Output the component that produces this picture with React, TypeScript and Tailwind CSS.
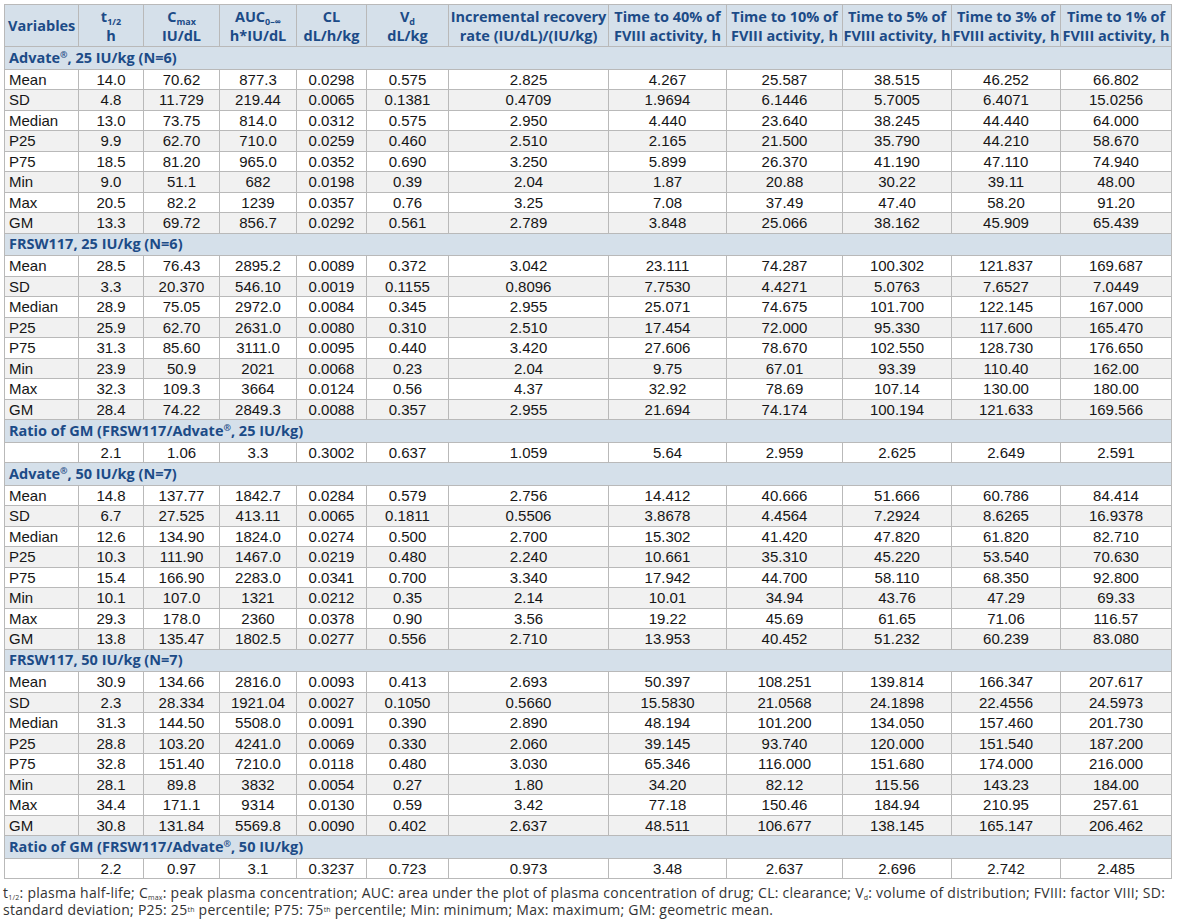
import React from "react"

type Row = string[]

const advate25: Row[] = [
  ["Mean", "14.0", "70.62", "877.3", "0.0298", "0.575", "2.825", "4.267", "25.587", "38.515", "46.252", "66.802"],
  ["SD", "4.8", "11.729", "219.44", "0.0065", "0.1381", "0.4709", "1.9694", "6.1446", "5.7005", "6.4071", "15.0256"],
  ["Median", "13.0", "73.75", "814.0", "0.0312", "0.575", "2.950", "4.440", "23.640", "38.245", "44.440", "64.000"],
  ["P25", "9.9", "62.70", "710.0", "0.0259", "0.460", "2.510", "2.165", "21.500", "35.790", "44.210", "58.670"],
  ["P75", "18.5", "81.20", "965.0", "0.0352", "0.690", "3.250", "5.899", "26.370", "41.190", "47.110", "74.940"],
  ["Min", "9.0", "51.1", "682", "0.0198", "0.39", "2.04", "1.87", "20.88", "30.22", "39.11", "48.00"],
  ["Max", "20.5", "82.2", "1239", "0.0357", "0.76", "3.25", "7.08", "37.49", "47.40", "58.20", "91.20"],
  ["GM", "13.3", "69.72", "856.7", "0.0292", "0.561", "2.789", "3.848", "25.066", "38.162", "45.909", "65.439"],
]

const frsw25: Row[] = [
  ["Mean", "28.5", "76.43", "2895.2", "0.0089", "0.372", "3.042", "23.111", "74.287", "100.302", "121.837", "169.687"],
  ["SD", "3.3", "20.370", "546.10", "0.0019", "0.1155", "0.8096", "7.7530", "4.4271", "5.0763", "7.6527", "7.0449"],
  ["Median", "28.9", "75.05", "2972.0", "0.0084", "0.345", "2.955", "25.071", "74.675", "101.700", "122.145", "167.000"],
  ["P25", "25.9", "62.70", "2631.0", "0.0080", "0.310", "2.510", "17.454", "72.000", "95.330", "117.600", "165.470"],
  ["P75", "31.3", "85.60", "3111.0", "0.0095", "0.440", "3.420", "27.606", "78.670", "102.550", "128.730", "176.650"],
  ["Min", "23.9", "50.9", "2021", "0.0068", "0.23", "2.04", "9.75", "67.01", "93.39", "110.40", "162.00"],
  ["Max", "32.3", "109.3", "3664", "0.0124", "0.56", "4.37", "32.92", "78.69", "107.14", "130.00", "180.00"],
  ["GM", "28.4", "74.22", "2849.3", "0.0088", "0.357", "2.955", "21.694", "74.174", "100.194", "121.633", "169.566"],
]

const ratio25: Row[] = [["", "2.1", "1.06", "3.3", "0.3002", "0.637", "1.059", "5.64", "2.959", "2.625", "2.649", "2.591"]]

const advate50: Row[] = [
  ["Mean", "14.8", "137.77", "1842.7", "0.0284", "0.579", "2.756", "14.412", "40.666", "51.666", "60.786", "84.414"],
  ["SD", "6.7", "27.525", "413.11", "0.0065", "0.1811", "0.5506", "3.8678", "4.4564", "7.2924", "8.6265", "16.9378"],
  ["Median", "12.6", "134.90", "1824.0", "0.0274", "0.500", "2.700", "15.302", "41.420", "47.820", "61.820", "82.710"],
  ["P25", "10.3", "111.90", "1467.0", "0.0219", "0.480", "2.240", "10.661", "35.310", "45.220", "53.540", "70.630"],
  ["P75", "15.4", "166.90", "2283.0", "0.0341", "0.700", "3.340", "17.942", "44.700", "58.110", "68.350", "92.800"],
  ["Min", "10.1", "107.0", "1321", "0.0212", "0.35", "2.14", "10.01", "34.94", "43.76", "47.29", "69.33"],
  ["Max", "29.3", "178.0", "2360", "0.0378", "0.90", "3.56", "19.22", "45.69", "61.65", "71.06", "116.57"],
  ["GM", "13.8", "135.47", "1802.5", "0.0277", "0.556", "2.710", "13.953", "40.452", "51.232", "60.239", "83.080"],
]

const frsw50: Row[] = [
  ["Mean", "30.9", "134.66", "2816.0", "0.0093", "0.413", "2.693", "50.397", "108.251", "139.814", "166.347", "207.617"],
  ["SD", "2.3", "28.334", "1921.04", "0.0027", "0.1050", "0.5660", "15.5830", "21.0568", "24.1898", "22.4556", "24.5973"],
  ["Median", "31.3", "144.50", "5508.0", "0.0091", "0.390", "2.890", "48.194", "101.200", "134.050", "157.460", "201.730"],
  ["P25", "28.8", "103.20", "4241.0", "0.0069", "0.330", "2.060", "39.145", "93.740", "120.000", "151.540", "187.200"],
  ["P75", "32.8", "151.40", "7210.0", "0.0118", "0.480", "3.030", "65.346", "116.000", "151.680", "174.000", "216.000"],
  ["Min", "28.1", "89.8", "3832", "0.0054", "0.27", "1.80", "34.20", "82.12", "115.56", "143.23", "184.00"],
  ["Max", "34.4", "171.1", "9314", "0.0130", "0.59", "3.42", "77.18", "150.46", "184.94", "210.95", "257.61"],
  ["GM", "30.8", "131.84", "5569.8", "0.0090", "0.402", "2.637", "48.511", "106.677", "138.145", "165.147", "206.462"],
]

const ratio50: Row[] = [["", "2.2", "0.97", "3.1", "0.3237", "0.723", "0.973", "3.48", "2.637", "2.696", "2.742", "2.485"]]

const widths = [74, 65, 76, 77, 70, 82, 160, 118, 116, 109, 109, 111]

const Sub = ({ children }: { children: React.ReactNode }) => (
  <span className="inline-block align-baseline text-[9px] leading-[9px] relative top-[3px]">{children}</span>
)

function GroupRow({ children }: { children: React.ReactNode }) {
  return (
    <tr className="h-[22.5px] bg-[#d5e0ea]">
      <td colSpan={12} className="border border-[#b9b9b9] px-[4px] font-['Open_Sans',sans-serif] text-[14.5px] font-bold leading-none text-[#1c4b87]">
        {children}
      </td>
    </tr>
  )
}

function DataRows({ rows }: { rows: Row[] }) {
  return (
    <>
      {rows.map((r, i) => (
        <tr key={i} className={i % 2 === 1 ? "h-[20.5px] bg-[#f1f1f1]" : "h-[20.5px] bg-white"}>
          {r.map((c, j) => (
            <td
              key={j}
              className={
                j === 0
                  ? "border border-[#b9b9b9] px-[4px] text-left leading-none"
                  : "border border-[#b9b9b9] text-center leading-none"
              }
            >
              {c}
            </td>
          ))}
        </tr>
      ))}
    </>
  )
}

export default function App() {
  const th = "border border-[#b9b9b9] text-center align-middle"
  return (
    <div className="w-[1178px] h-[924px] bg-white px-[4px] pt-[4px]">
      <table className="table-fixed border-collapse w-[1167px] font-['Liberation_Sans',Arial,sans-serif] text-[15px] text-[#161616]">
        <colgroup>
          {widths.map((w, i) => (
            <col key={i} style={{ width: w }} />
          ))}
        </colgroup>
        <thead>
          <tr className="h-[42px] bg-[#d5e0ea] font-['Open_Sans',sans-serif] text-[14.5px] font-bold leading-[19px] text-[#1c4b87]">
            <th className="border border-[#b9b9b9] px-[3px] text-left align-middle">Variables</th>
            <th className={th}>
              t<Sub>1/2</Sub>
              <br />h
            </th>
            <th className={th}>
              C<Sub>max</Sub>
              <br />
              IU/dL
            </th>
            <th className={th}>
              AUC<Sub>0–∞</Sub>
              <br />
              h*IU/dL
            </th>
            <th className={th}>
              CL
              <br />
              dL/h/kg
            </th>
            <th className={th}>
              V<Sub>d</Sub>
              <br />
              dL/kg
            </th>
            <th className={th + " whitespace-nowrap"}>
              Incremental recovery
              <br />
              rate (IU/dL)/(IU/kg)
            </th>
            <th className={th + " whitespace-nowrap"}>
              Time to 40% of
              <br />
              FVIII activity, h
            </th>
            <th className={th + " whitespace-nowrap"}>
              Time to 10% of
              <br />
              FVIII activity, h
            </th>
            <th className={th + " whitespace-nowrap"}>
              Time to 5% of
              <br />
              FVIII activity, h
            </th>
            <th className={th + " whitespace-nowrap"}>
              Time to 3% of
              <br />
              FVIII activity, h
            </th>
            <th className={th + " whitespace-nowrap"}>
              Time to 1% of
              <br />
              FVIII activity, h
            </th>
          </tr>
        </thead>
        <tbody>
          <GroupRow>
            Advate<sup className="text-[9px]">®</sup>, 25 IU/kg (N=6)
          </GroupRow>
          <DataRows rows={advate25} />
          <GroupRow>FRSW117, 25 IU/kg (N=6)</GroupRow>
          <DataRows rows={frsw25} />
          <GroupRow>
            Ratio of GM (FRSW117/Advate<sup className="text-[9px]">®</sup>, 25 IU/kg)
          </GroupRow>
          <DataRows rows={ratio25} />
          <GroupRow>
            Advate<sup className="text-[9px]">®</sup>, 50 IU/kg (N=7)
          </GroupRow>
          <DataRows rows={advate50} />
          <GroupRow>FRSW117, 50 IU/kg (N=7)</GroupRow>
          <DataRows rows={frsw50} />
          <GroupRow>
            Ratio of GM (FRSW117/Advate<sup className="text-[9px]">®</sup>, 50 IU/kg)
          </GroupRow>
          <DataRows rows={ratio50} />
        </tbody>
      </table>
      <p className="mt-[5px] -ml-[1px] whitespace-nowrap font-['Open_Sans',sans-serif] text-[14px] tracking-[0.25px] leading-[17px] text-[#333]">
        t<sub className="text-[7px]">1/2</sub>: plasma half-life; C<sub className="text-[7px]">max</sub>: peak plasma
        concentration; AUC: area under the plot of plasma concentration of drug; CL: clearance; V
        <sub className="text-[7px]">d</sub>: volume of distribution; FVIII: factor VIII; SD:
        <br />
        standard deviation; P25: 25<sup className="text-[7px]">th</sup> percentile; P75: 75
        <sup className="text-[7px]">th</sup> percentile; Min: minimum; Max: maximum; GM: geometric mean.
      </p>
    </div>
  )
}
